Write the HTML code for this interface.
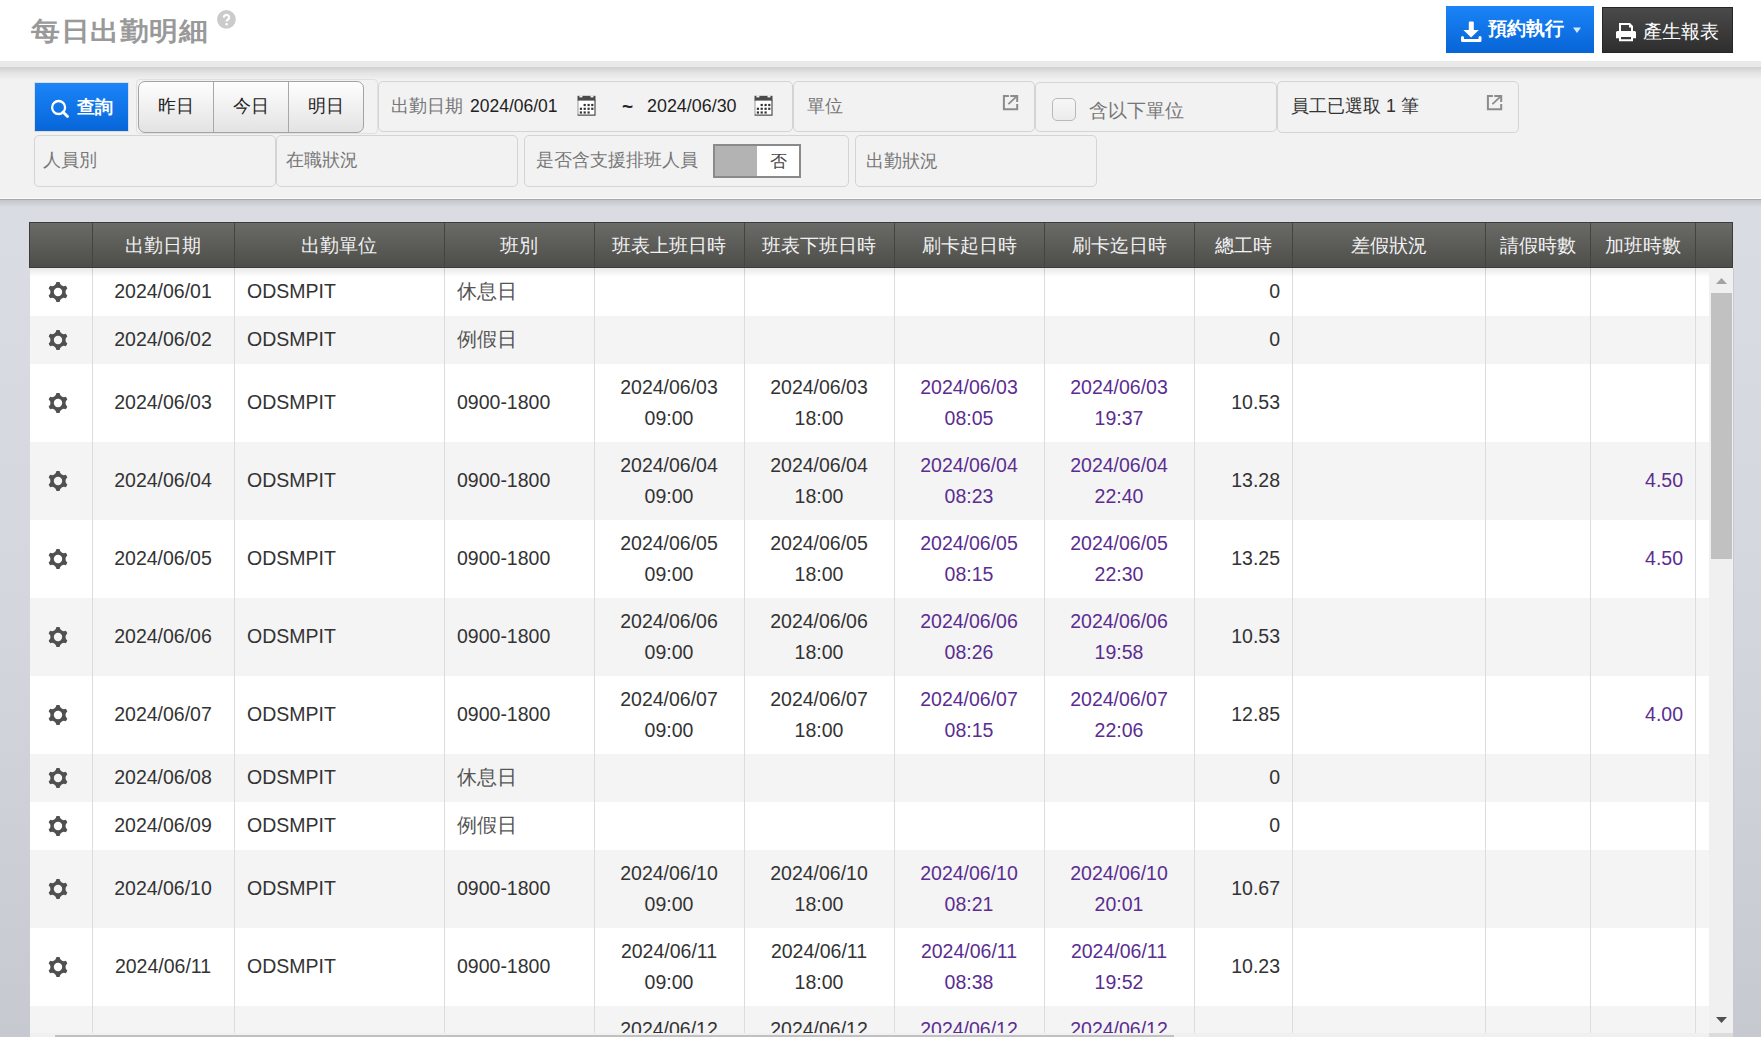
<!DOCTYPE html>
<html><head><meta charset="utf-8">
<style>
*{box-sizing:border-box}
html,body{margin:0;padding:0}
body{width:1761px;height:1037px;overflow:hidden;position:relative;font-family:"Liberation Sans",sans-serif;background:linear-gradient(#d9dce3 0px,#d9dce3 230px,#d3d6dc 630px,#c6c9d0 1037px);color:#333}
.abs{position:absolute}
#hdr{left:0;top:0;width:1761px;height:61px;background:#fff}
#title{left:31px;top:11px;font-size:29px;font-weight:bold;color:#999;line-height:40px;white-space:nowrap;letter-spacing:0.6px;transform:scaleY(0.9);transform-origin:0 23px}
#qm{left:217px;top:11px;width:18px;height:18px;border-radius:50%;background:#cdcdcd;color:#fff;font-size:14px;font-weight:bold;text-align:center;line-height:18px}
#band{left:0;top:61px;width:1761px;height:6px;background:#e9e9e9}
#panel{left:0;top:67px;width:1761px;height:131px;background:linear-gradient(#cfcfcf 0px,#e4e4e4 6px,#f2f2f2 13px,#f2f2f2 100%)}
#pline1{left:0;top:198px;width:1761px;height:1px;background:#fbfbfb}
#pline2{left:0;top:199px;width:1761px;height:1px;background:#a9a9a9}
#pshadow{left:0;top:200px;width:1761px;height:7px;background:linear-gradient(#c3c5ca,rgba(217,220,226,0))}
.btn{position:absolute;color:#fff;white-space:nowrap}
#b1{left:1446px;top:6px;width:148px;height:47px;background:linear-gradient(#1a84f8,#0764d6)}
#b2{left:1602px;top:7px;width:131px;height:46px;background:linear-gradient(#4a4a4a,#2e2e2e);border:1px solid #262626}
.bt{position:absolute;font-size:19px;line-height:24px;white-space:nowrap}
.box{position:absolute;border:1px solid #d4d4d4;border-radius:5px;background:#f2f2f2}
.lbl{position:absolute;font-size:17.8px;color:#777;white-space:nowrap;line-height:20px}
.val{position:absolute;font-size:18px;color:#222;white-space:nowrap;line-height:20px}
/* table */
#thead{left:29px;top:222px;width:1704px;height:46px;background:linear-gradient(#6a6a66,#4d4d4a);border:1px solid #3c3c3a}
.hc{position:absolute;top:222px;height:46px;line-height:47px;text-align:center;color:#f2f2f2;font-size:18.7px;white-space:nowrap}
.hvl{position:absolute;top:223px;height:44px;width:1px;background:#44443f}
#tbody{left:30px;top:268px;width:1704px;height:765px;background:#fff;overflow:hidden}
.row{position:absolute;left:30px;width:1679px}
.vl{position:absolute;top:268px;height:765px;width:1px;background:#dcdcdc}
.gear{position:absolute;left:48px;width:20px;height:20px}
.gear svg{display:block}
.cell{position:absolute;display:flex;align-items:center;font-size:19.5px;line-height:31px;color:#333;white-space:nowrap}
.cell.c{justify-content:center;text-align:center}
.cell.l{justify-content:flex-start;padding-left:13px}
.cell.r{justify-content:flex-end;padding-right:12px}
.cell.pu{color:#5b2d91}
.cell.cj{color:#555}
#tshadow{left:30px;top:268px;width:1679px;height:9px;background:linear-gradient(rgba(0,0,0,0.09),rgba(0,0,0,0))}
#vtrack{left:1709px;top:268px;width:25px;height:765px;background:#f0f0f0}
#vthumb{left:1711px;top:293px;width:21px;height:266px;background:#c1c1c1}
#htrack{left:30px;top:1033px;width:1679px;height:4px;background:#f0f0f0}
#hthumb{left:55px;top:1035px;width:1119px;height:2px;background:#c1c1c1}
#corner{left:1709px;top:1033px;width:25px;height:4px;background:#dcdcdc}
#rborder{left:1733px;top:268px;width:1px;height:769px;background:#c9cacd}
</style></head><body>
<div id="hdr" class="abs"></div>
<div id="title" class="abs">每日出勤明細</div>
<svg class="abs" style="left:217px;top:10.2px" width="19" height="19" viewBox="0 0 19 19"><circle cx="9.4" cy="9.35" r="9.35" fill="#cbcbcb"/><path fill="none" stroke="#fff" stroke-width="2.3" d="M6.9 7.4A2.6 2.6 0 1 1 11.5 9.07C10.2 9.9 9.6 10.4 9.6 11.6"/><circle cx="9.6" cy="14.3" r="1.3" fill="#fff"/></svg>
<div id="band" class="abs"></div>
<div id="panel" class="abs"></div>
<div id="pline1" class="abs"></div>
<div id="pline2" class="abs"></div>
<div id="pshadow" class="abs"></div>

<div id="b1" class="btn">
 <svg class="abs" style="left:15px;top:15px" width="21" height="22" viewBox="0 0 21 22"><path fill="#fff" d="M7.8 1.6Q7.8 0.6 8.8 0.6h3Q12.8 0.6 12.8 1.6V9h5L10.1 16.4L2.4 9h5.4z"/><path fill="none" stroke="#fff" stroke-width="3" stroke-linecap="round" stroke-linejoin="round" d="M1.5 16.6v3h17.5v-3"/></svg>
 <div class="bt" style="left:42px;top:11px;font-weight:bold">預約執行</div>
 <svg class="abs" style="left:127px;top:21px" width="8" height="7" viewBox="0 0 8 7"><path fill="#d6e6fb" d="M0 0.5h8L4 6z"/></svg>
</div>
<div id="b2" class="btn">
 <svg class="abs" style="left:13px;top:15px" width="21" height="19" viewBox="0 0 21 19"><path fill="#fff" fill-rule="evenodd" d="M3 0H14L17 3V9H3ZM5 2V9H15V4.5H13V2Z"/><path fill="#fff" fill-rule="evenodd" d="M0 9.5Q0 8 1.5 8H18.5Q20 8 20 9.5V15.3H17V18.2H3V15.3H0ZM5 14H15V16.2H5Z"/></svg>
 <div class="bt" style="left:40px;top:12px">產生報表</div>
</div>

<!-- filters row 1 -->
<div class="abs" style="left:34px;top:82px;width:95px;height:50px;background:#eee;border:1px solid #e2dcd6"></div>
<div class="abs" style="left:35px;top:83px;width:93px;height:48px;background:linear-gradient(#1a84f8,#0766d9)"></div>
<svg class="abs" style="left:50px;top:98.7px" width="20" height="20" viewBox="0 0 20 20"><circle cx="8.6" cy="8.5" r="6.5" fill="none" stroke="#fff" stroke-width="2.3"/><path d="M13 13l4.5 4.5" stroke="#fff" stroke-width="2.8" stroke-linecap="round"/></svg>
<div class="abs" style="left:77px;top:95.5px;font-size:17.6px;line-height:22px;font-weight:bold;color:#fff">查詢</div>

<div class="box" style="left:136px;top:79px;width:242px;height:55px;border-color:#e0e0e0;border-radius:4px"></div>
<div class="abs" style="left:138px;top:81px;width:226px;height:52px;border:1px solid #a3a3a3;border-radius:7px;background:linear-gradient(#fefefe,#e3e3e3)"></div>
<div class="abs" style="left:213px;top:82px;width:1px;height:50px;background:#a8a8a8"></div>
<div class="abs" style="left:288px;top:82px;width:1px;height:50px;background:#a8a8a8"></div>
<div class="abs" style="left:139px;top:95px;width:74px;text-align:center;font-size:18px;line-height:22px;color:#222">昨日</div>
<div class="abs" style="left:214px;top:95px;width:74px;text-align:center;font-size:18px;line-height:22px;color:#222">今日</div>
<div class="abs" style="left:289px;top:95px;width:74px;text-align:center;font-size:18px;line-height:22px;color:#222">明日</div>

<div class="box" style="left:378px;top:81px;width:415px;height:51px"></div>
<div class="lbl" style="left:391px;top:96px">出勤日期</div>
<div class="val" style="left:470px;top:96px;font-size:17.5px">2024/06/01</div>
<div class="val" style="left:622px;top:97px;font-size:19px;font-weight:bold">~</div>
<div class="val" style="left:647px;top:96px;font-size:17.9px">2024/06/30</div>
<svg class="abs" style="left:577px;top:95px" width="19" height="21" viewBox="0 0 19 21"><rect x="1" y="5" width="17" height="14.6" fill="#fff"/><path fill="none" stroke="#9a9a9a" stroke-width="1" d="M1 5V20"/><path fill="none" stroke="#505050" stroke-width="1.2" d="M18 5V20.2H0.6"/><path fill="#4a4a4a" d="M0.5 0.8H18.5V5.6H0.5Z"/><rect x="2.4" y="0.4" width="3" height="2" fill="#f2f2f2"/><rect x="13.5" y="0.4" width="3" height="2" fill="#f2f2f2"/><g fill="#333"><rect x="6.6" y="8.9" width="2.2" height="2.2"/><rect x="10.5" y="8.9" width="2.2" height="2.2"/><rect x="14.2" y="8.9" width="2.2" height="2.2"/><rect x="2.8" y="12.7" width="2.2" height="2.2"/><rect x="6.6" y="12.7" width="2.2" height="2.2"/><rect x="10.5" y="12.7" width="2.2" height="2.2"/><rect x="14.2" y="12.7" width="2.2" height="2.2"/><rect x="2.8" y="16.4" width="2.2" height="2.2"/><rect x="6.6" y="16.4" width="2.2" height="2.2"/><rect x="10.5" y="16.4" width="2.2" height="2.2"/></g></svg>
<svg class="abs" style="left:754px;top:95px" width="19" height="21" viewBox="0 0 19 21"><rect x="1" y="5" width="17" height="14.6" fill="#fff"/><path fill="none" stroke="#9a9a9a" stroke-width="1" d="M1 5V20"/><path fill="none" stroke="#505050" stroke-width="1.2" d="M18 5V20.2H0.6"/><path fill="#4a4a4a" d="M0.5 0.8H18.5V5.6H0.5Z"/><rect x="2.4" y="0.4" width="3" height="2" fill="#f2f2f2"/><rect x="13.5" y="0.4" width="3" height="2" fill="#f2f2f2"/><g fill="#333"><rect x="6.6" y="8.9" width="2.2" height="2.2"/><rect x="10.5" y="8.9" width="2.2" height="2.2"/><rect x="14.2" y="8.9" width="2.2" height="2.2"/><rect x="2.8" y="12.7" width="2.2" height="2.2"/><rect x="6.6" y="12.7" width="2.2" height="2.2"/><rect x="10.5" y="12.7" width="2.2" height="2.2"/><rect x="14.2" y="12.7" width="2.2" height="2.2"/><rect x="2.8" y="16.4" width="2.2" height="2.2"/><rect x="6.6" y="16.4" width="2.2" height="2.2"/><rect x="10.5" y="16.4" width="2.2" height="2.2"/></g></svg>

<div class="box" style="left:793px;top:81px;width:242px;height:51px"></div>
<div class="lbl" style="left:807px;top:96px">單位</div>
<svg class="abs" style="left:1002px;top:94px" width="17" height="17" viewBox="0 0 17 17"><path fill="none" stroke="#8c8c8c" stroke-width="2" d="M6.9 1.9H1.9V15.2H15.2V10"/><path fill="none" stroke="#8c8c8c" stroke-width="2" d="M8.3 1.9H15.2V8"/><path stroke="#8c8c8c" stroke-width="1.8" d="M6.4 10.1L14.4 2.7"/></svg>

<div class="box" style="left:1035px;top:82px;width:242px;height:50px"></div>
<div class="abs" style="left:1052px;top:98px;width:24px;height:23px;border:1.5px solid #b9b9b9;border-radius:5px;background:linear-gradient(#f6f6f6,#ececec)"></div>
<div class="lbl" style="left:1089px;top:100px;font-size:19px;line-height:22px">含以下單位</div>

<div class="box" style="left:1277px;top:81px;width:242px;height:52px"></div>
<div class="val" style="left:1291px;top:96px;font-size:17.8px;color:#333">員工已選取 1 筆</div>
<svg class="abs" style="left:1486px;top:94px" width="17" height="17" viewBox="0 0 17 17"><path fill="none" stroke="#8c8c8c" stroke-width="2" d="M6.9 1.9H1.9V15.2H15.2V10"/><path fill="none" stroke="#8c8c8c" stroke-width="2" d="M8.3 1.9H15.2V8"/><path stroke="#8c8c8c" stroke-width="1.8" d="M6.4 10.1L14.4 2.7"/></svg>

<!-- filters row 2 -->
<div class="box" style="left:34px;top:135px;width:242px;height:52px"></div>
<div class="lbl" style="left:43px;top:150px">人員別</div>
<div class="box" style="left:276px;top:135px;width:242px;height:52px"></div>
<div class="lbl" style="left:286px;top:150px">在職狀況</div>
<div class="box" style="left:524px;top:135px;width:325px;height:52px"></div>
<div class="lbl" style="left:536px;top:150px">是否含支援排班人員</div>
<div class="abs" style="left:713px;top:144px;width:88px;height:34px;border:2px solid #8a8a8a;background:#fff"></div>
<div class="abs" style="left:715px;top:146px;width:42px;height:30px;background:#b3b3b3"></div>
<div class="abs" style="left:757px;top:150px;width:42px;text-align:center;font-size:16.5px;line-height:22px;color:#444">否</div>
<div class="box" style="left:855px;top:135px;width:242px;height:52px"></div>
<div class="lbl" style="left:866px;top:151px">出勤狀況</div>

<!-- table -->
<div id="tbody" class="abs"></div>
<div class="row" style="top:268px;height:48px;background:#fff"></div>
<div class="gear" style="top:282px"><svg width="20" height="20" viewBox="0 0 20 20"><path fill="#505050" fill-rule="evenodd" d="M19.34 13.58A10 10 0 0 1 17.77 16.29A4.4 4.4 0 0 0 11.56 19.88A10 10 0 0 1 8.44 19.88A4.4 4.4 0 0 0 2.23 16.29A10 10 0 0 1 0.66 13.58A4.4 4.4 0 0 0 0.66 6.42A10 10 0 0 1 2.23 3.71A4.4 4.4 0 0 0 8.44 0.12A10 10 0 0 1 11.56 0.12A4.4 4.4 0 0 0 17.77 3.71A10 10 0 0 1 19.34 6.42A4.4 4.4 0 0 0 19.34 13.58ZM14.2 10A4.2 4.2 0 1 0 5.8 10A4.2 4.2 0 1 0 14.2 10Z"/></svg></div>
<div class="cell c " style="left:92px;width:142px;top:267px;height:48px"><span>2024/06/01</span></div>
<div class="cell l " style="left:234px;width:210px;top:267px;height:48px"><span>ODSMPIT</span></div>
<div class="cell l cj" style="left:444px;width:150px;top:267px;height:48px"><span>休息日</span></div>
<div class="cell r " style="left:1194px;width:98px;top:267px;height:48px"><span>0</span></div>
<div class="row" style="top:316px;height:48px;background:#f4f4f4"></div>
<div class="gear" style="top:330px"><svg width="20" height="20" viewBox="0 0 20 20"><path fill="#505050" fill-rule="evenodd" d="M19.34 13.58A10 10 0 0 1 17.77 16.29A4.4 4.4 0 0 0 11.56 19.88A10 10 0 0 1 8.44 19.88A4.4 4.4 0 0 0 2.23 16.29A10 10 0 0 1 0.66 13.58A4.4 4.4 0 0 0 0.66 6.42A10 10 0 0 1 2.23 3.71A4.4 4.4 0 0 0 8.44 0.12A10 10 0 0 1 11.56 0.12A4.4 4.4 0 0 0 17.77 3.71A10 10 0 0 1 19.34 6.42A4.4 4.4 0 0 0 19.34 13.58ZM14.2 10A4.2 4.2 0 1 0 5.8 10A4.2 4.2 0 1 0 14.2 10Z"/></svg></div>
<div class="cell c " style="left:92px;width:142px;top:315px;height:48px"><span>2024/06/02</span></div>
<div class="cell l " style="left:234px;width:210px;top:315px;height:48px"><span>ODSMPIT</span></div>
<div class="cell l cj" style="left:444px;width:150px;top:315px;height:48px"><span>例假日</span></div>
<div class="cell r " style="left:1194px;width:98px;top:315px;height:48px"><span>0</span></div>
<div class="row" style="top:364px;height:78px;background:#fff"></div>
<div class="gear" style="top:393px"><svg width="20" height="20" viewBox="0 0 20 20"><path fill="#505050" fill-rule="evenodd" d="M19.34 13.58A10 10 0 0 1 17.77 16.29A4.4 4.4 0 0 0 11.56 19.88A10 10 0 0 1 8.44 19.88A4.4 4.4 0 0 0 2.23 16.29A10 10 0 0 1 0.66 13.58A4.4 4.4 0 0 0 0.66 6.42A10 10 0 0 1 2.23 3.71A4.4 4.4 0 0 0 8.44 0.12A10 10 0 0 1 11.56 0.12A4.4 4.4 0 0 0 17.77 3.71A10 10 0 0 1 19.34 6.42A4.4 4.4 0 0 0 19.34 13.58ZM14.2 10A4.2 4.2 0 1 0 5.8 10A4.2 4.2 0 1 0 14.2 10Z"/></svg></div>
<div class="cell c " style="left:92px;width:142px;top:363px;height:78px"><span>2024/06/03</span></div>
<div class="cell l " style="left:234px;width:210px;top:363px;height:78px"><span>ODSMPIT</span></div>
<div class="cell l " style="left:444px;width:150px;top:363px;height:78px"><span>0900-1800</span></div>
<div class="cell c " style="left:594px;width:150px;top:364px;height:78px"><span>2024/06/03<br>09:00</span></div>
<div class="cell c " style="left:744px;width:150px;top:364px;height:78px"><span>2024/06/03<br>18:00</span></div>
<div class="cell c pu" style="left:894px;width:150px;top:364px;height:78px"><span>2024/06/03<br>08:05</span></div>
<div class="cell c pu" style="left:1044px;width:150px;top:364px;height:78px"><span>2024/06/03<br>19:37</span></div>
<div class="cell r " style="left:1194px;width:98px;top:363px;height:78px"><span>10.53</span></div>
<div class="row" style="top:442px;height:78px;background:#f4f4f4"></div>
<div class="gear" style="top:471px"><svg width="20" height="20" viewBox="0 0 20 20"><path fill="#505050" fill-rule="evenodd" d="M19.34 13.58A10 10 0 0 1 17.77 16.29A4.4 4.4 0 0 0 11.56 19.88A10 10 0 0 1 8.44 19.88A4.4 4.4 0 0 0 2.23 16.29A10 10 0 0 1 0.66 13.58A4.4 4.4 0 0 0 0.66 6.42A10 10 0 0 1 2.23 3.71A4.4 4.4 0 0 0 8.44 0.12A10 10 0 0 1 11.56 0.12A4.4 4.4 0 0 0 17.77 3.71A10 10 0 0 1 19.34 6.42A4.4 4.4 0 0 0 19.34 13.58ZM14.2 10A4.2 4.2 0 1 0 5.8 10A4.2 4.2 0 1 0 14.2 10Z"/></svg></div>
<div class="cell c " style="left:92px;width:142px;top:441px;height:78px"><span>2024/06/04</span></div>
<div class="cell l " style="left:234px;width:210px;top:441px;height:78px"><span>ODSMPIT</span></div>
<div class="cell l " style="left:444px;width:150px;top:441px;height:78px"><span>0900-1800</span></div>
<div class="cell c " style="left:594px;width:150px;top:442px;height:78px"><span>2024/06/04<br>09:00</span></div>
<div class="cell c " style="left:744px;width:150px;top:442px;height:78px"><span>2024/06/04<br>18:00</span></div>
<div class="cell c pu" style="left:894px;width:150px;top:442px;height:78px"><span>2024/06/04<br>08:23</span></div>
<div class="cell c pu" style="left:1044px;width:150px;top:442px;height:78px"><span>2024/06/04<br>22:40</span></div>
<div class="cell r " style="left:1194px;width:98px;top:441px;height:78px"><span>13.28</span></div>
<div class="cell r pu" style="left:1590px;width:105px;top:441px;height:78px"><span>4.50</span></div>
<div class="row" style="top:520px;height:78px;background:#fff"></div>
<div class="gear" style="top:549px"><svg width="20" height="20" viewBox="0 0 20 20"><path fill="#505050" fill-rule="evenodd" d="M19.34 13.58A10 10 0 0 1 17.77 16.29A4.4 4.4 0 0 0 11.56 19.88A10 10 0 0 1 8.44 19.88A4.4 4.4 0 0 0 2.23 16.29A10 10 0 0 1 0.66 13.58A4.4 4.4 0 0 0 0.66 6.42A10 10 0 0 1 2.23 3.71A4.4 4.4 0 0 0 8.44 0.12A10 10 0 0 1 11.56 0.12A4.4 4.4 0 0 0 17.77 3.71A10 10 0 0 1 19.34 6.42A4.4 4.4 0 0 0 19.34 13.58ZM14.2 10A4.2 4.2 0 1 0 5.8 10A4.2 4.2 0 1 0 14.2 10Z"/></svg></div>
<div class="cell c " style="left:92px;width:142px;top:519px;height:78px"><span>2024/06/05</span></div>
<div class="cell l " style="left:234px;width:210px;top:519px;height:78px"><span>ODSMPIT</span></div>
<div class="cell l " style="left:444px;width:150px;top:519px;height:78px"><span>0900-1800</span></div>
<div class="cell c " style="left:594px;width:150px;top:520px;height:78px"><span>2024/06/05<br>09:00</span></div>
<div class="cell c " style="left:744px;width:150px;top:520px;height:78px"><span>2024/06/05<br>18:00</span></div>
<div class="cell c pu" style="left:894px;width:150px;top:520px;height:78px"><span>2024/06/05<br>08:15</span></div>
<div class="cell c pu" style="left:1044px;width:150px;top:520px;height:78px"><span>2024/06/05<br>22:30</span></div>
<div class="cell r " style="left:1194px;width:98px;top:519px;height:78px"><span>13.25</span></div>
<div class="cell r pu" style="left:1590px;width:105px;top:519px;height:78px"><span>4.50</span></div>
<div class="row" style="top:598px;height:78px;background:#f4f4f4"></div>
<div class="gear" style="top:627px"><svg width="20" height="20" viewBox="0 0 20 20"><path fill="#505050" fill-rule="evenodd" d="M19.34 13.58A10 10 0 0 1 17.77 16.29A4.4 4.4 0 0 0 11.56 19.88A10 10 0 0 1 8.44 19.88A4.4 4.4 0 0 0 2.23 16.29A10 10 0 0 1 0.66 13.58A4.4 4.4 0 0 0 0.66 6.42A10 10 0 0 1 2.23 3.71A4.4 4.4 0 0 0 8.44 0.12A10 10 0 0 1 11.56 0.12A4.4 4.4 0 0 0 17.77 3.71A10 10 0 0 1 19.34 6.42A4.4 4.4 0 0 0 19.34 13.58ZM14.2 10A4.2 4.2 0 1 0 5.8 10A4.2 4.2 0 1 0 14.2 10Z"/></svg></div>
<div class="cell c " style="left:92px;width:142px;top:597px;height:78px"><span>2024/06/06</span></div>
<div class="cell l " style="left:234px;width:210px;top:597px;height:78px"><span>ODSMPIT</span></div>
<div class="cell l " style="left:444px;width:150px;top:597px;height:78px"><span>0900-1800</span></div>
<div class="cell c " style="left:594px;width:150px;top:598px;height:78px"><span>2024/06/06<br>09:00</span></div>
<div class="cell c " style="left:744px;width:150px;top:598px;height:78px"><span>2024/06/06<br>18:00</span></div>
<div class="cell c pu" style="left:894px;width:150px;top:598px;height:78px"><span>2024/06/06<br>08:26</span></div>
<div class="cell c pu" style="left:1044px;width:150px;top:598px;height:78px"><span>2024/06/06<br>19:58</span></div>
<div class="cell r " style="left:1194px;width:98px;top:597px;height:78px"><span>10.53</span></div>
<div class="row" style="top:676px;height:78px;background:#fff"></div>
<div class="gear" style="top:705px"><svg width="20" height="20" viewBox="0 0 20 20"><path fill="#505050" fill-rule="evenodd" d="M19.34 13.58A10 10 0 0 1 17.77 16.29A4.4 4.4 0 0 0 11.56 19.88A10 10 0 0 1 8.44 19.88A4.4 4.4 0 0 0 2.23 16.29A10 10 0 0 1 0.66 13.58A4.4 4.4 0 0 0 0.66 6.42A10 10 0 0 1 2.23 3.71A4.4 4.4 0 0 0 8.44 0.12A10 10 0 0 1 11.56 0.12A4.4 4.4 0 0 0 17.77 3.71A10 10 0 0 1 19.34 6.42A4.4 4.4 0 0 0 19.34 13.58ZM14.2 10A4.2 4.2 0 1 0 5.8 10A4.2 4.2 0 1 0 14.2 10Z"/></svg></div>
<div class="cell c " style="left:92px;width:142px;top:675px;height:78px"><span>2024/06/07</span></div>
<div class="cell l " style="left:234px;width:210px;top:675px;height:78px"><span>ODSMPIT</span></div>
<div class="cell l " style="left:444px;width:150px;top:675px;height:78px"><span>0900-1800</span></div>
<div class="cell c " style="left:594px;width:150px;top:676px;height:78px"><span>2024/06/07<br>09:00</span></div>
<div class="cell c " style="left:744px;width:150px;top:676px;height:78px"><span>2024/06/07<br>18:00</span></div>
<div class="cell c pu" style="left:894px;width:150px;top:676px;height:78px"><span>2024/06/07<br>08:15</span></div>
<div class="cell c pu" style="left:1044px;width:150px;top:676px;height:78px"><span>2024/06/07<br>22:06</span></div>
<div class="cell r " style="left:1194px;width:98px;top:675px;height:78px"><span>12.85</span></div>
<div class="cell r pu" style="left:1590px;width:105px;top:675px;height:78px"><span>4.00</span></div>
<div class="row" style="top:754px;height:48px;background:#f4f4f4"></div>
<div class="gear" style="top:768px"><svg width="20" height="20" viewBox="0 0 20 20"><path fill="#505050" fill-rule="evenodd" d="M19.34 13.58A10 10 0 0 1 17.77 16.29A4.4 4.4 0 0 0 11.56 19.88A10 10 0 0 1 8.44 19.88A4.4 4.4 0 0 0 2.23 16.29A10 10 0 0 1 0.66 13.58A4.4 4.4 0 0 0 0.66 6.42A10 10 0 0 1 2.23 3.71A4.4 4.4 0 0 0 8.44 0.12A10 10 0 0 1 11.56 0.12A4.4 4.4 0 0 0 17.77 3.71A10 10 0 0 1 19.34 6.42A4.4 4.4 0 0 0 19.34 13.58ZM14.2 10A4.2 4.2 0 1 0 5.8 10A4.2 4.2 0 1 0 14.2 10Z"/></svg></div>
<div class="cell c " style="left:92px;width:142px;top:753px;height:48px"><span>2024/06/08</span></div>
<div class="cell l " style="left:234px;width:210px;top:753px;height:48px"><span>ODSMPIT</span></div>
<div class="cell l cj" style="left:444px;width:150px;top:753px;height:48px"><span>休息日</span></div>
<div class="cell r " style="left:1194px;width:98px;top:753px;height:48px"><span>0</span></div>
<div class="row" style="top:802px;height:48px;background:#fff"></div>
<div class="gear" style="top:816px"><svg width="20" height="20" viewBox="0 0 20 20"><path fill="#505050" fill-rule="evenodd" d="M19.34 13.58A10 10 0 0 1 17.77 16.29A4.4 4.4 0 0 0 11.56 19.88A10 10 0 0 1 8.44 19.88A4.4 4.4 0 0 0 2.23 16.29A10 10 0 0 1 0.66 13.58A4.4 4.4 0 0 0 0.66 6.42A10 10 0 0 1 2.23 3.71A4.4 4.4 0 0 0 8.44 0.12A10 10 0 0 1 11.56 0.12A4.4 4.4 0 0 0 17.77 3.71A10 10 0 0 1 19.34 6.42A4.4 4.4 0 0 0 19.34 13.58ZM14.2 10A4.2 4.2 0 1 0 5.8 10A4.2 4.2 0 1 0 14.2 10Z"/></svg></div>
<div class="cell c " style="left:92px;width:142px;top:801px;height:48px"><span>2024/06/09</span></div>
<div class="cell l " style="left:234px;width:210px;top:801px;height:48px"><span>ODSMPIT</span></div>
<div class="cell l cj" style="left:444px;width:150px;top:801px;height:48px"><span>例假日</span></div>
<div class="cell r " style="left:1194px;width:98px;top:801px;height:48px"><span>0</span></div>
<div class="row" style="top:850px;height:78px;background:#f4f4f4"></div>
<div class="gear" style="top:879px"><svg width="20" height="20" viewBox="0 0 20 20"><path fill="#505050" fill-rule="evenodd" d="M19.34 13.58A10 10 0 0 1 17.77 16.29A4.4 4.4 0 0 0 11.56 19.88A10 10 0 0 1 8.44 19.88A4.4 4.4 0 0 0 2.23 16.29A10 10 0 0 1 0.66 13.58A4.4 4.4 0 0 0 0.66 6.42A10 10 0 0 1 2.23 3.71A4.4 4.4 0 0 0 8.44 0.12A10 10 0 0 1 11.56 0.12A4.4 4.4 0 0 0 17.77 3.71A10 10 0 0 1 19.34 6.42A4.4 4.4 0 0 0 19.34 13.58ZM14.2 10A4.2 4.2 0 1 0 5.8 10A4.2 4.2 0 1 0 14.2 10Z"/></svg></div>
<div class="cell c " style="left:92px;width:142px;top:849px;height:78px"><span>2024/06/10</span></div>
<div class="cell l " style="left:234px;width:210px;top:849px;height:78px"><span>ODSMPIT</span></div>
<div class="cell l " style="left:444px;width:150px;top:849px;height:78px"><span>0900-1800</span></div>
<div class="cell c " style="left:594px;width:150px;top:850px;height:78px"><span>2024/06/10<br>09:00</span></div>
<div class="cell c " style="left:744px;width:150px;top:850px;height:78px"><span>2024/06/10<br>18:00</span></div>
<div class="cell c pu" style="left:894px;width:150px;top:850px;height:78px"><span>2024/06/10<br>08:21</span></div>
<div class="cell c pu" style="left:1044px;width:150px;top:850px;height:78px"><span>2024/06/10<br>20:01</span></div>
<div class="cell r " style="left:1194px;width:98px;top:849px;height:78px"><span>10.67</span></div>
<div class="row" style="top:928px;height:78px;background:#fff"></div>
<div class="gear" style="top:957px"><svg width="20" height="20" viewBox="0 0 20 20"><path fill="#505050" fill-rule="evenodd" d="M19.34 13.58A10 10 0 0 1 17.77 16.29A4.4 4.4 0 0 0 11.56 19.88A10 10 0 0 1 8.44 19.88A4.4 4.4 0 0 0 2.23 16.29A10 10 0 0 1 0.66 13.58A4.4 4.4 0 0 0 0.66 6.42A10 10 0 0 1 2.23 3.71A4.4 4.4 0 0 0 8.44 0.12A10 10 0 0 1 11.56 0.12A4.4 4.4 0 0 0 17.77 3.71A10 10 0 0 1 19.34 6.42A4.4 4.4 0 0 0 19.34 13.58ZM14.2 10A4.2 4.2 0 1 0 5.8 10A4.2 4.2 0 1 0 14.2 10Z"/></svg></div>
<div class="cell c " style="left:92px;width:142px;top:927px;height:78px"><span>2024/06/11</span></div>
<div class="cell l " style="left:234px;width:210px;top:927px;height:78px"><span>ODSMPIT</span></div>
<div class="cell l " style="left:444px;width:150px;top:927px;height:78px"><span>0900-1800</span></div>
<div class="cell c " style="left:594px;width:150px;top:928px;height:78px"><span>2024/06/11<br>09:00</span></div>
<div class="cell c " style="left:744px;width:150px;top:928px;height:78px"><span>2024/06/11<br>18:00</span></div>
<div class="cell c pu" style="left:894px;width:150px;top:928px;height:78px"><span>2024/06/11<br>08:38</span></div>
<div class="cell c pu" style="left:1044px;width:150px;top:928px;height:78px"><span>2024/06/11<br>19:52</span></div>
<div class="cell r " style="left:1194px;width:98px;top:927px;height:78px"><span>10.23</span></div>
<div class="row" style="top:1006px;height:78px;background:#f4f4f4"></div>
<div class="gear" style="top:1035px"><svg width="20" height="20" viewBox="0 0 20 20"><path fill="#505050" fill-rule="evenodd" d="M19.34 13.58A10 10 0 0 1 17.77 16.29A4.4 4.4 0 0 0 11.56 19.88A10 10 0 0 1 8.44 19.88A4.4 4.4 0 0 0 2.23 16.29A10 10 0 0 1 0.66 13.58A4.4 4.4 0 0 0 0.66 6.42A10 10 0 0 1 2.23 3.71A4.4 4.4 0 0 0 8.44 0.12A10 10 0 0 1 11.56 0.12A4.4 4.4 0 0 0 17.77 3.71A10 10 0 0 1 19.34 6.42A4.4 4.4 0 0 0 19.34 13.58ZM14.2 10A4.2 4.2 0 1 0 5.8 10A4.2 4.2 0 1 0 14.2 10Z"/></svg></div>
<div class="cell c " style="left:92px;width:142px;top:1005px;height:78px"><span>2024/06/12</span></div>
<div class="cell l " style="left:234px;width:210px;top:1005px;height:78px"><span>ODSMPIT</span></div>
<div class="cell l " style="left:444px;width:150px;top:1005px;height:78px"><span>0900-1800</span></div>
<div class="cell c " style="left:594px;width:150px;top:1006px;height:78px"><span>2024/06/12<br>09:00</span></div>
<div class="cell c " style="left:744px;width:150px;top:1006px;height:78px"><span>2024/06/12<br>18:00</span></div>
<div class="cell c pu" style="left:894px;width:150px;top:1006px;height:78px"><span>2024/06/12<br>08:00</span></div>
<div class="cell c pu" style="left:1044px;width:150px;top:1006px;height:78px"><span>2024/06/12<br>19:00</span></div>
<div class="cell r " style="left:1194px;width:98px;top:1005px;height:78px"><span>10.00</span></div>
<div class="vl" style="left:92px"></div>
<div class="vl" style="left:234px"></div>
<div class="vl" style="left:444px"></div>
<div class="vl" style="left:594px"></div>
<div class="vl" style="left:744px"></div>
<div class="vl" style="left:894px"></div>
<div class="vl" style="left:1044px"></div>
<div class="vl" style="left:1194px"></div>
<div class="vl" style="left:1292px"></div>
<div class="vl" style="left:1485px"></div>
<div class="vl" style="left:1590px"></div>
<div class="vl" style="left:1695px"></div>
<div id="tshadow" class="abs"></div>
<div id="vtrack" class="abs"></div>
<div id="vthumb" class="abs"></div>
<svg class="abs" style="left:1716px;top:278px" width="11" height="7" viewBox="0 0 11 7"><path fill="#a3a3a3" d="M0 6h11L5.5 0z"/></svg>
<svg class="abs" style="left:1716px;top:1017px" width="11" height="6" viewBox="0 0 11 6"><path fill="#505050" d="M0 0h11L5.5 6z"/></svg>
<div id="htrack" class="abs"></div>
<div id="hthumb" class="abs"></div>
<div id="corner" class="abs"></div>
<div id="rborder" class="abs"></div>
<div id="thead" class="abs"></div>
<div class="hc" style="left:29px;width:63px"></div>
<div class="hc" style="left:92px;width:142px">出勤日期</div>
<div class="hc" style="left:234px;width:210px">出勤單位</div>
<div class="hc" style="left:444px;width:150px">班別</div>
<div class="hc" style="left:594px;width:150px">班表上班日時</div>
<div class="hc" style="left:744px;width:150px">班表下班日時</div>
<div class="hc" style="left:894px;width:150px">刷卡起日時</div>
<div class="hc" style="left:1044px;width:150px">刷卡迄日時</div>
<div class="hc" style="left:1194px;width:98px">總工時</div>
<div class="hc" style="left:1292px;width:193px">差假狀況</div>
<div class="hc" style="left:1485px;width:105px">請假時數</div>
<div class="hc" style="left:1590px;width:105px">加班時數</div>
<div class="hc" style="left:1695px;width:38px"></div>
<div class="hvl" style="left:92px"></div>
<div class="hvl" style="left:234px"></div>
<div class="hvl" style="left:444px"></div>
<div class="hvl" style="left:594px"></div>
<div class="hvl" style="left:744px"></div>
<div class="hvl" style="left:894px"></div>
<div class="hvl" style="left:1044px"></div>
<div class="hvl" style="left:1194px"></div>
<div class="hvl" style="left:1292px"></div>
<div class="hvl" style="left:1485px"></div>
<div class="hvl" style="left:1590px"></div>
<div class="hvl" style="left:1695px"></div>
</body></html>
